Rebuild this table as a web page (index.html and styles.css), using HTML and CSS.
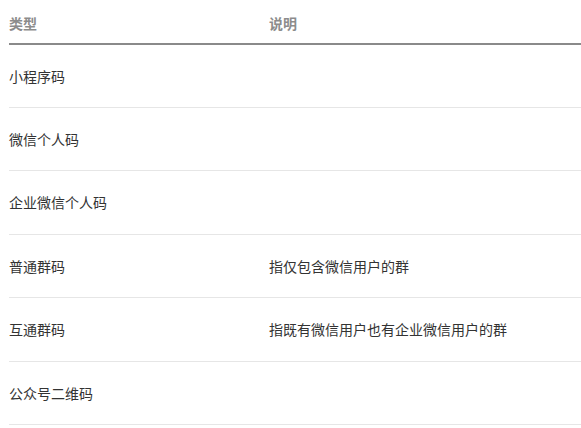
FILE: index.html
```html
<!DOCTYPE html>
<html lang="zh-CN">
<head>
<meta charset="utf-8">
<link rel="stylesheet" href="styles.css">
</head>
<body>
<div class="wrap">
<table class="tbl">
  <thead>
    <tr><th class="c1">类型</th><th>说明</th></tr>
  </thead>
  <tbody>
    <tr><td class="c1">小程序码</td><td></td></tr>
    <tr><td class="c1">微信个人码</td><td></td></tr>
    <tr><td class="c1">企业微信个人码</td><td></td></tr>
    <tr><td class="c1">普通群码</td><td>指仅包含微信用户的群</td></tr>
    <tr><td class="c1">互通群码</td><td>指既有微信用户也有企业微信用户的群</td></tr>
    <tr><td class="c1">公众号二维码</td><td></td></tr>
  </tbody>
</table>
</div>
</body>
</html>
```

FILE: styles.css
```css
html, body {
  margin: 0;
  padding: 0;
  background: #fff;
}
.wrap {
  padding-left: 9px;
}
.tbl {
  width: 100%;
  border-collapse: collapse;
  font-family: "Noto Sans CJK SC", "Noto Sans", sans-serif;
  font-size: 14px;
  color: #333;
}
.tbl th {
  text-align: left;
  font-weight: bold;
  color: #8c8c8c;
  font-size: 14px;
  line-height: 22px;
  padding: 12px 0 8.6px;
  border-bottom: 2px solid #8a8a8a;
}
.tbl td {
  line-height: 22.4px;
  padding: 20px 0;
  border-bottom: 1px solid #e6e6e6;
  vertical-align: middle;
}
.tbl .c1 {
  width: 260px;
}
```
